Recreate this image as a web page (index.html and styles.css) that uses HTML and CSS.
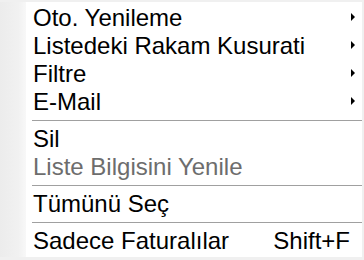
FILE: index.html
```html
<!DOCTYPE html>
<html lang="tr">
<head>
<meta charset="utf-8">
<title>Menu</title>
<link rel="stylesheet" href="styles.css">
</head>
<body>
<div class="frame">
  <div class="gutter"></div>
  <ul class="panel">
    <li class="item"><span>Oto. Yenileme</span><span class="arrow"></span></li>
    <li class="item"><span>Listedeki Rakam Kusurati</span><span class="arrow"></span></li>
    <li class="item"><span>Filtre</span><span class="arrow"></span></li>
    <li class="item"><span>E-Mail</span><span class="arrow"></span></li>
    <li class="sep"></li>
    <li class="item"><span>Sil</span></li>
    <li class="item disabled"><span>Liste Bilgisini Yenile</span></li>
    <li class="sep"></li>
    <li class="item"><span>Tümünü Seç</span></li>
    <li class="sep"></li>
    <li class="item"><span>Sadece Faturalılar</span><span class="shortcut">Shift+F</span></li>
  </ul>
</div>
</body>
</html>
```
FILE: styles.css
```css
html, body {
  margin: 0;
  padding: 0;
  background: #f0f0f0;
}
.frame {
  display: flex;
  width: 364px;
  height: 260px;
  box-sizing: border-box;
  padding: 2px 2px 3px 0;
  background: #f0f0f0;
  font-family: "Liberation Sans", Arial, sans-serif;
  font-size: 24px;
  color: #000;
}
.gutter {
  width: 26px;
  background: linear-gradient(to right, #ececec 0%, #f1f1f1 70%, #f8f8f8 100%);
}
.panel {
  flex: 1;
  list-style: none;
  margin: 0;
  padding: 2px 0;
  background: #fff;
}
.item {
  display: flex;
  align-items: center;
  justify-content: space-between;
  height: 28px;
  box-sizing: border-box;
  line-height: 24px;
  padding: 2px 7px 2px 7px;
  white-space: nowrap;
}
.item.disabled {
  color: #6d6d6d;
}
.arrow {
  width: 0;
  height: 0;
  border-left: 4px solid #000;
  border-top: 4px solid transparent;
  border-bottom: 4px solid transparent;
  margin-bottom: 3px;
}
.shortcut {
  margin-right: 5px;
}
.sep {
  height: 0;
  margin: 4px 0 4px 6px;
  border-top: 1px solid #a0a0a0;
}
```
